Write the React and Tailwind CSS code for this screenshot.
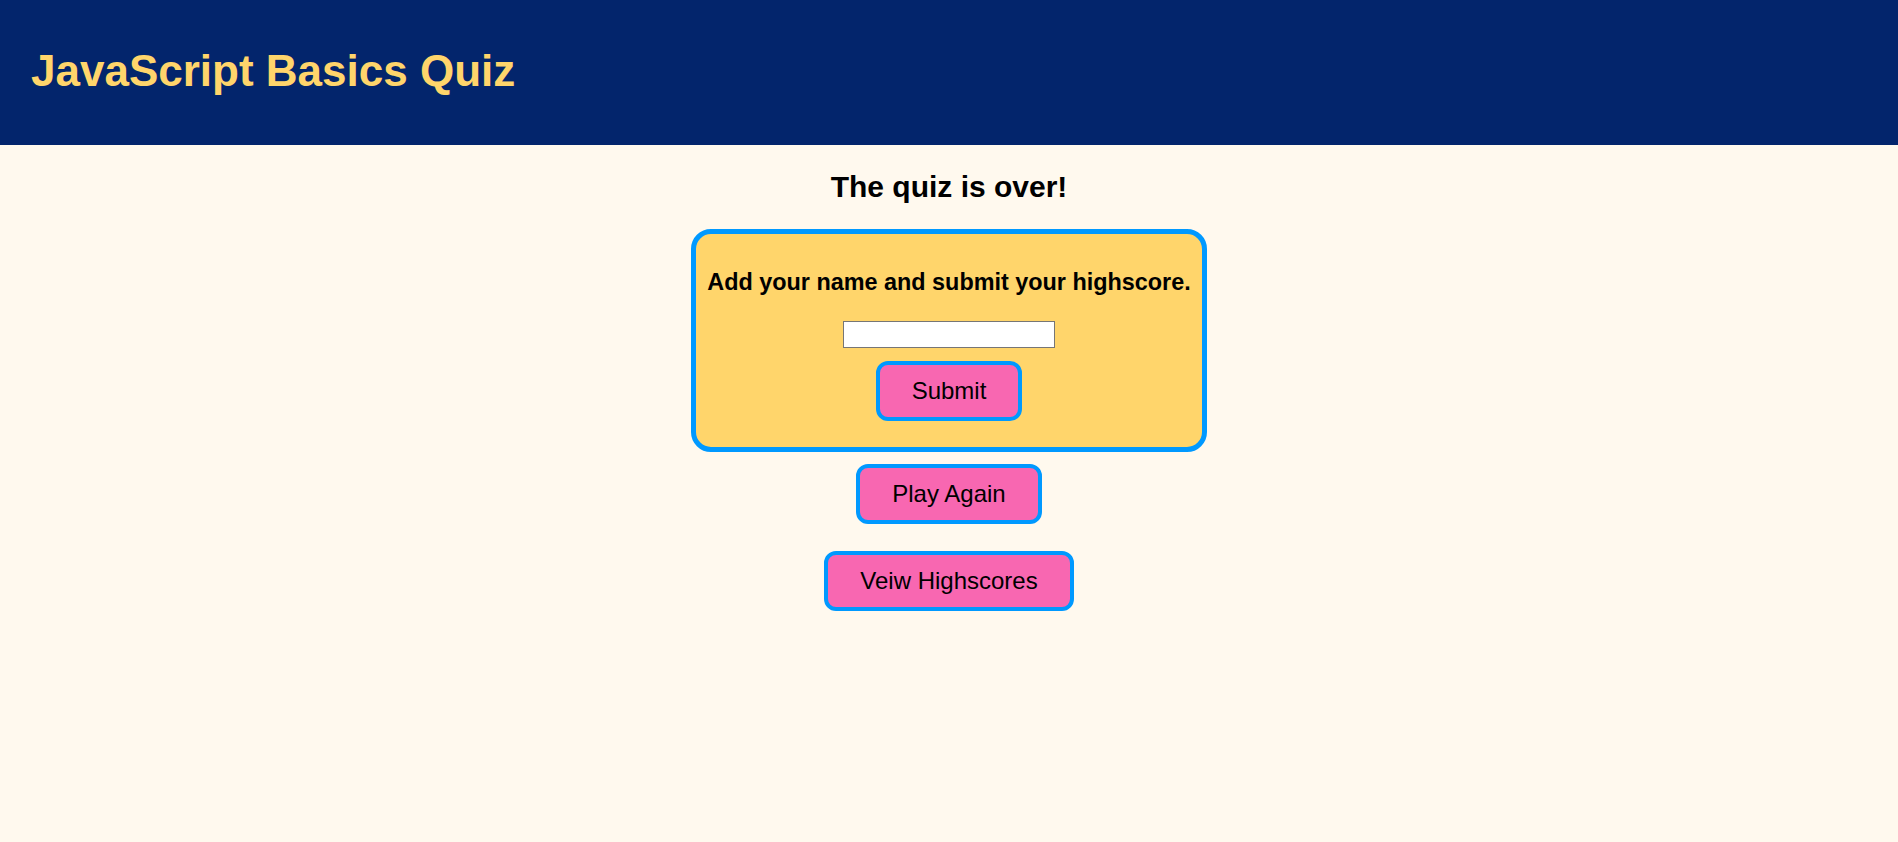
export default function App() {
  const btn =
    "h-[60px] px-8 border-4 border-[#0099ff] rounded-xl bg-[#f867b1] text-[24px] leading-[28px] text-black";
  return (
    <div className="min-h-[842px] bg-[#fff9ee] font-['Liberation_Sans',Arial,sans-serif]">
      <header className="h-[145px] bg-[#03256c] flex items-center pl-[31px] pb-[4px]">
        <h1 className="text-[44px] font-bold leading-[46px] text-[#ffd56b]">
          JavaScript Basics Quiz
        </h1>
      </header>
      <main className="flex flex-col items-center">
        <h2 className="mt-[25px] text-[30px] font-bold leading-[34px] text-black">
          The quiz is over!
        </h2>
        <section className="mt-[25px] w-[516px] h-[223px] border-[5px] border-[#0099ff] rounded-[20px] bg-[#ffd56b] flex flex-col items-center">
          <h3 className="mt-[35px] text-[23.4px] font-bold leading-[27px] text-black">
            Add your name and submit your highscore.
          </h3>
          <input
            type="text"
            className="mt-[25px] w-[212px] h-[27px] bg-white border border-[#767676] rounded-none"
          />
          <button className={"mt-[13px] " + btn}>Submit</button>
        </section>
        <button className={"mt-[12px] " + btn}>Play Again</button>
        <button className={"mt-[27px] " + btn}>Veiw Highscores</button>
      </main>
    </div>
  );
}
